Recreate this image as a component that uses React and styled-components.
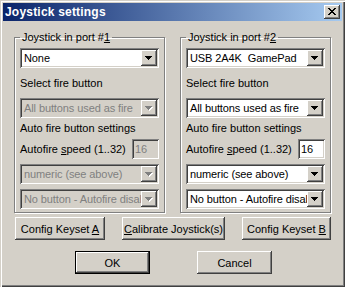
import React from "react";
import styled, { createGlobalStyle } from "styled-components";

const GlobalStyle = createGlobalStyle`
    html, body {
        margin: 0;
        padding: 0;
        background: #d4d0c8;
    }
    #root {
        width: 345px;
        height: 287px;
    }
    * {
        box-sizing: border-box;
    }
`;

const raised = `
    box-shadow: inset -1px -1px #404040, inset 1px 1px #ffffff,
        inset -2px -2px #808080, inset 2px 2px #d4d0c8;
`;

const sunken = `
    box-shadow: inset 1px 1px #808080, inset -1px -1px #ffffff,
        inset 2px 2px #404040, inset -2px -2px #d4d0c8;
`;

const Window = styled.div`
    width: 345px;
    height: 287px;
    background: #d4d0c8;
    box-shadow: inset 1px 1px #d4d0c8, inset 2px 2px #ffffff,
        inset -1px -1px #404040, inset -2px -2px #808080;
    padding: 3px;
    display: flex;
    flex-direction: column;
    font-family: "Liberation Sans", Arial, sans-serif;
    font-size: 11px;
    color: #000;
`;

const TitleBar = styled.div`
    height: 18px;
    display: flex;
    align-items: center;
    justify-content: space-between;
    padding: 0 2px;
    background: linear-gradient(90deg, #0a246a 0%, #a6caf0 100%);
`;

const Title = styled.span`
    color: #fff;
    font-weight: bold;
    font-size: 12px;
    letter-spacing: 0.2px;
`;

const CloseButton = styled.div`
    width: 16px;
    height: 14px;
    background: #d4d0c8;
    ${raised}
    display: flex;
    align-items: center;
    justify-content: center;
    padding-bottom: 1px;
`;

const Content = styled.div`
    flex: 1;
    display: flex;
    flex-direction: column;
    padding: 10px 11px 0 11px;
`;

const Groups = styled.div`
    display: flex;
    gap: 15px;
`;

const Group = styled.fieldset`
    margin: 0;
    width: 151px;
    min-width: 0;
    padding: 4px 5px 3px 5px;
    border: 1px solid #808080;
    box-shadow: inset 1px 1px #ffffff, 1px 1px #ffffff;
    display: flex;
    flex-direction: column;
`;

const Legend = styled.legend`
    padding: 0 2px;
    margin: 0;
    line-height: 13px;
`;

const Label = styled.div(({ mt = 0 }) => `
    line-height: 13px;
    margin-top: ${mt}px;
    white-space: nowrap;
`);

const Combo = styled.div(({ disabled, mt = 0 }) => `
    height: 20px;
    width: 100%;
    margin-top: ${mt}px;
    display: flex;
    padding: 2px;
    background: ${disabled ? "#d4d0c8" : "#ffffff"};
    color: ${disabled ? "#808080" : "#000000"};
    ${sunken}
`);

const ComboText = styled.div`
    flex: 1;
    min-width: 0;
    overflow: hidden;
    white-space: pre;
    padding-left: 2px;
    line-height: 16px;
    letter-spacing: -0.1px;
`;

const ComboArrow = styled.div`
    width: 16px;
    height: 16px;
    flex: none;
    background: #d4d0c8;
    ${raised}
    display: flex;
    align-items: center;
    justify-content: center;
`;

const SpeedRow = styled.div(({ mt = 0 }) => `
    display: flex;
    align-items: center;
    justify-content: space-between;
    margin-top: ${mt}px;
`);

const SpeedBox = styled.div(({ disabled }) => `
    width: 27px;
    height: 20px;
    padding: 2px 3px;
    line-height: 16px;
    background: ${disabled ? "#d4d0c8" : "#ffffff"};
    color: ${disabled ? "#808080" : "#000000"};
    ${sunken}
`);

const U = styled.span`
    text-decoration: underline;
`;

const ButtonRow = styled.div`
    display: flex;
    justify-content: space-between;
    padding: 0 0 0 1px;
    margin-top: 4px;
`;

const ActionRow = styled.div`
    display: flex;
    justify-content: center;
    gap: 47px;
    margin-top: 11px;
    padding-left: 2px;
`;

const Button = styled.div(({ w = 75, isDefault }) => `
    width: ${w}px;
    height: 23px;
    background: #d4d0c8;
    display: flex;
    align-items: center;
    justify-content: center;
    white-space: nowrap;
    ${isDefault
        ? `border: 1px solid #000;
           box-shadow: inset -1px -1px #404040, inset 1px 1px #ffffff,
               inset -2px -2px #808080, inset 2px 2px #d4d0c8;`
        : raised}
`);

const CloseIcon = () => (
    <svg width="8" height="7" viewBox="0 0 8 7" shapeRendering="crispEdges">
        <path
            fill="#000"
            d="M0 0h2v1h-2zM6 0h2v1h-2zM1 1h2v1h-2zM5 1h2v1h-2zM2 2h4v1h-4zM3 3h2v1h-2zM2 4h4v1h-4zM1 5h2v1h-2zM5 5h2v1h-2zM0 6h2v1h-2zM6 6h2v1h-2z"
        />
    </svg>
);

const Arrow = ({ disabled }) => (
    <svg width="8" height="5" viewBox="0 0 8 5" shapeRendering="crispEdges">
        {disabled && <path fill="#fff" d="M1 1h7v1h-7zM2 2h5v1h-5zM3 3h3v1h-3zM4 4h1v1h-1z" />}
        <path
            fill={disabled ? "#808080" : "#000"}
            d="M0 0h7v1h-7zM1 1h5v1h-5zM2 2h3v1h-3zM3 3h1v1h-1z"
        />
    </svg>
);

const Select = ({ value, disabled, mt }) => (
    <Combo disabled={disabled} mt={mt}>
        <ComboText>{value}</ComboText>
        <ComboArrow>
            <Arrow disabled={disabled} />
        </ComboArrow>
    </Combo>
);

const PortGroup = ({ port, device, disabled }) => (
    <Group>
        <Legend>
            Joystick in port #<U>{port}</U>
        </Legend>
        <Select value={device} />
        <Label mt={9}>Select fire button</Label>
        <Select value="All buttons used as fire" disabled={disabled} mt={8} />
        <Label mt={4}>Auto fire button settings</Label>
        <SpeedRow mt={4}>
            <span>
                Autofire <U>s</U>peed (1..32)
            </span>
            <SpeedBox disabled={disabled}>16</SpeedBox>
        </SpeedRow>
        <Select value="numeric (see above)" disabled={disabled} mt={5} />
        <Select value="No button - Autofire disabled" disabled={disabled} mt={5} />
    </Group>
);

const App = () => (
    <>
        <GlobalStyle />
        <Window>
            <TitleBar>
                <Title>Joystick settings</Title>
                <CloseButton>
                    <CloseIcon />
                </CloseButton>
            </TitleBar>
            <Content>
                <Groups>
                    <PortGroup port="1" device="None" disabled />
                    <PortGroup port="2" device="USB 2A4K  GamePad" />
                </Groups>
                <ButtonRow>
                    <Button w={90}>
                        <span>Config Keyset <U>A</U></span>
                    </Button>
                    <Button w={103}>
                        <span><U>C</U>alibrate Joystick(s)</span>
                    </Button>
                    <Button w={89}>
                        <span>Config Keyset <U>B</U></span>
                    </Button>
                </ButtonRow>
                <ActionRow>
                    <Button w={75} isDefault>OK</Button>
                    <Button w={75}>Cancel</Button>
                </ActionRow>
            </Content>
        </Window>
    </>
);

export default App;
